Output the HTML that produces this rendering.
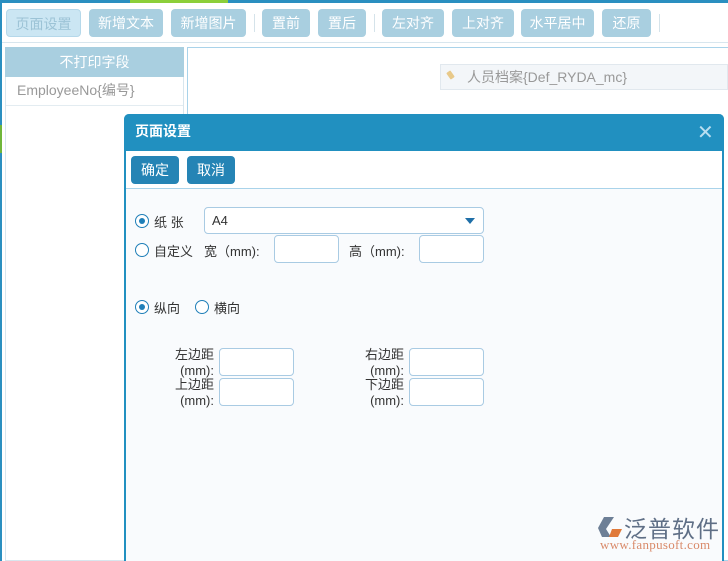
<!DOCTYPE html><html><head><meta charset="utf-8"><style>
*{box-sizing:border-box;margin:0;padding:0}
body{width:728px;height:561px;overflow:hidden;background:#fff;font-family:"Liberation Sans","Noto Sans CJK SC",sans-serif;font-size:13px;position:relative;color:#333}
.abs{position:absolute}
.btn{position:absolute;top:9px;height:28px;border-radius:4px;background:#a9cfe0;color:#fff;font-size:14px;line-height:28px;text-align:center}
.sep{position:absolute;top:14px;width:1px;height:18px;background:#d5e3ea}
.inp{position:absolute;border:1px solid #a9cbe3;border-radius:4px;background:#fff}
.radio{position:absolute;width:14px;height:14px;border:1.5px solid #1f7fb8;border-radius:50%;background:#fff}
.radio.on::after{content:"";position:absolute;left:2.5px;top:2.5px;width:6px;height:6px;border-radius:50%;background:#1f7fb8}
.t{position:absolute;font-size:13px;color:#333;white-space:nowrap}
</style></head><body>
<div class="abs" style="left:0;top:0;width:728px;height:3px;background:#2a8fc0"></div>
<div class="abs" style="left:130px;top:0;width:98px;height:3px;background:#8ccf3a"></div>
<div class="abs" style="left:0;top:3px;width:2px;height:558px;background:#2a8fc0"></div>
<div class="abs" style="left:0;top:125px;width:2px;height:28px;background:#6fb63a"></div>
<div class="abs" style="left:2px;top:42px;width:726px;height:1px;background:#d8e6ee"></div>
<div class="btn" style="left:6px;width:75px;background:#cbe6f3;color:#9cc3d6;border:1px solid #b5d8ea">页面设置</div>
<div class="btn" style="left:89px;width:74px">新增文本</div>
<div class="btn" style="left:171px;width:75px">新增图片</div>
<div class="sep" style="left:254px"></div>
<div class="btn" style="left:262px;width:48px">置前</div>
<div class="btn" style="left:318px;width:48px">置后</div>
<div class="sep" style="left:374px"></div>
<div class="btn" style="left:382px;width:62px">左对齐</div>
<div class="btn" style="left:452px;width:62px">上对齐</div>
<div class="btn" style="left:521px;width:73px">水平居中</div>
<div class="btn" style="left:602px;width:49px">还原</div>
<div class="sep" style="left:659px"></div>
<div class="abs" style="left:5px;top:47px;width:179px;height:514px;border:1px solid #d8e6ee;background:#fff"></div>
<div class="abs" style="left:5px;top:47px;width:179px;height:30px;background:#a9cfe0;color:#fff;font-size:14px;line-height:30px;text-align:center">不打印字段</div>
<div class="abs" style="left:6px;top:77px;width:177px;height:29px;border-bottom:1px solid #e3ecf1;color:#999;font-size:14px;line-height:27px;padding-left:11px">EmployeeNo{编号}</div>
<div class="abs" style="left:187px;top:47px;width:541px;height:514px;border:1px solid #a9d3ea;border-right:none;background:#fff"></div>
<div class="abs" style="left:440px;top:64px;width:288px;height:26px;background:#f3f6f9;border:1px solid #e1e8ee;color:#999;font-size:14px;line-height:24px;padding-left:26px">人员档案{Def_RYDA_mc}</div>
<div class="abs" style="left:448px;top:71px;width:5px;height:8px;background:#e8c98a;transform:rotate(-35deg);border-radius:1px"></div>
<div class="abs" style="left:124px;top:114px;width:600px;height:447px;background:#f9fbfd;border:2px solid #2190c0;border-top:none;border-bottom:none;border-radius:5px 5px 0 0"></div>
<div class="abs" style="left:124px;top:114px;width:600px;height:37px;background:#2190c0;border-radius:5px 5px 0 0;color:#fff;font-size:14px;font-weight:bold;line-height:34px;padding-left:11px">页面设置</div>
<div class="abs" style="left:697px;top:120px;color:#b9def0;font-size:20px">✕</div>
<div class="abs" style="left:126px;top:151px;width:596px;height:38px;border-bottom:1px solid #a9d3ea;background:#fff"></div>
<div class="abs" style="left:131px;top:156px;width:48px;height:28px;border-radius:4px;background:#2584b5;color:#fff;font-size:14px;line-height:28px;text-align:center">确定</div>
<div class="abs" style="left:187px;top:156px;width:48px;height:28px;border-radius:4px;background:#2584b5;color:#fff;font-size:14px;line-height:28px;text-align:center">取消</div>
<div class="radio on" style="left:135px;top:214px"></div><div class="t" style="left:154px;top:212px">纸 张</div>
<div class="inp" style="left:204px;top:207px;width:280px;height:27px"><span style="position:absolute;left:7px;top:5px;font-size:13px">A4</span><span style="position:absolute;right:8px;top:10px;border-left:5px solid transparent;border-right:5px solid transparent;border-top:6px solid #1f6fa8"></span></div>
<div class="radio" style="left:135px;top:243px"></div><div class="t" style="left:154px;top:241px">自定义</div>
<div class="t" style="left:204px;top:241px">宽（mm):</div>
<div class="inp" style="left:274px;top:235px;width:65px;height:28px"></div>
<div class="t" style="left:349px;top:241px">高（mm):</div>
<div class="inp" style="left:419px;top:235px;width:65px;height:28px"></div>
<div class="radio on" style="left:135px;top:300px"></div><div class="t" style="left:154px;top:298px">纵向</div>
<div class="radio" style="left:195px;top:300px"></div><div class="t" style="left:214px;top:298px">横向</div>
<div class="t" style="left:170px;top:347px;text-align:right;width:44px;line-height:16px">左边距<br>(mm):</div>
<div class="inp" style="left:219px;top:348px;width:75px;height:28px"></div>
<div class="t" style="left:170px;top:377px;text-align:right;width:44px;line-height:16px">上边距<br>(mm):</div>
<div class="inp" style="left:219px;top:378px;width:75px;height:28px"></div>
<div class="t" style="left:360px;top:347px;text-align:right;width:44px;line-height:16px">右边距<br>(mm):</div>
<div class="inp" style="left:409px;top:348px;width:75px;height:28px"></div>
<div class="t" style="left:360px;top:377px;text-align:right;width:44px;line-height:16px">下边距<br>(mm):</div>
<div class="inp" style="left:409px;top:378px;width:75px;height:28px"></div>
<svg class="abs" style="left:598px;top:515px" width="26" height="26" viewBox="0 0 26 26"><path d="M6 2h10L8 14l5 8H4L0 13z" fill="#6d7f96"/><path d="M14 14h10l-4 8h-9z" fill="#e07a3a"/></svg>
<div class="abs" style="left:624px;top:510px;color:#5f6f86;font-size:23px;letter-spacing:1px">泛普软件</div>
<div class="abs" style="left:600px;top:537px;color:#d98a6a;font-size:13px;letter-spacing:0.3px;font-family:'Liberation Serif',serif">www.fanpusoft.com</div>
</body></html>
